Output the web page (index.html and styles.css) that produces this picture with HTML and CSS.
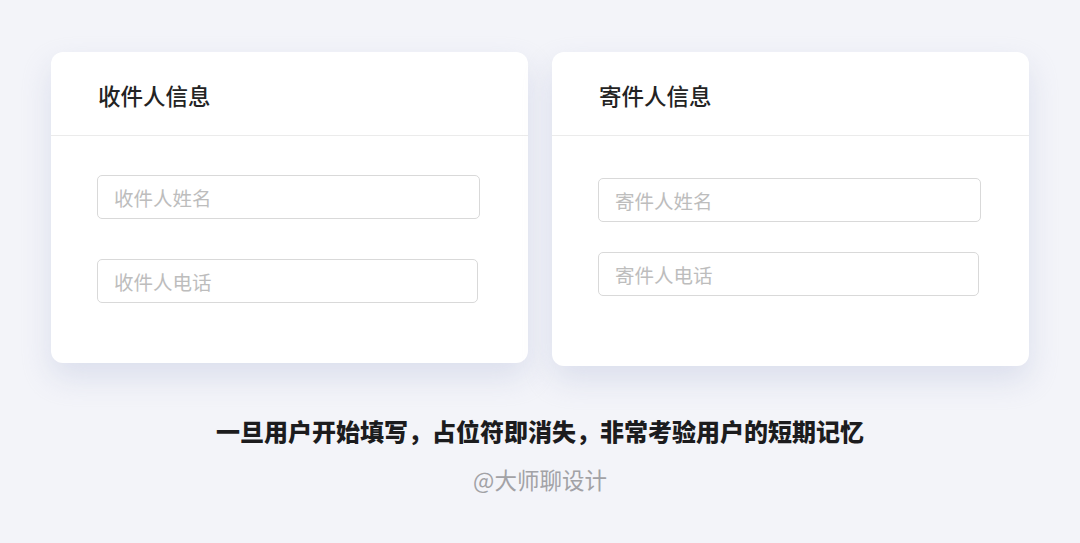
FILE: index.html
```html
<!DOCTYPE html>
<html lang="zh-CN">
<head>
<meta charset="utf-8">
<link rel="stylesheet" href="styles.css">
</head>
<body>
<main class="page">
  <section class="cards">
    <div class="card card--a">
      <div class="card__head">收件人信息</div>
      <div class="card__body">
        <div class="field field--w383">收件人姓名</div>
        <div class="field field--w381">收件人电话</div>
      </div>
    </div>
    <div class="card card--b">
      <div class="card__head">寄件人信息</div>
      <div class="card__body">
        <div class="field field--w383">寄件人姓名</div>
        <div class="field field--w381">寄件人电话</div>
      </div>
    </div>
  </section>
  <p class="caption">一旦用户开始填写，占位符即消失，非常考验用户的短期记忆</p>
  <p class="credit">@大师聊设计</p>
</main>
</body>
</html>
```

FILE: styles.css
```css
* { box-sizing: border-box; }
html, body {
  margin: 0;
  padding: 0;
  width: 1080px;
  height: 543px;
  overflow: hidden;
  background: #f3f4f9;
  font-family: "Noto Sans CJK SC", "Noto Sans", sans-serif;
}
.page {
  display: flex;
  flex-direction: column;
  align-items: center;
  padding-top: 52px;
}
.cards {
  display: flex;
  gap: 24px;
  align-items: flex-start;
  width: 978px;
}
.card {
  width: 477px;
  background: #fff;
  border-radius: 12px;
  box-shadow: 0 14px 30px rgba(190, 198, 222, 0.45);
}
.card--a { height: 311px; }
.card--b { height: 314px; }
.card__head {
  height: 84px;
  border-bottom: 1px solid #ebebeb;
  padding-left: 47px;
  display: flex;
  align-items: center;
  font-size: 22.5px;
  font-weight: 500;
  color: #232323;
  padding-top: 2px;
}
.card__body {
  display: flex;
  flex-direction: column;
  padding-left: 46px;
}
.card--a .card__body { padding-top: 39px; gap: 40px; }
.card--b .card__body { padding-top: 42px; gap: 30px; }
.field {
  height: 44px;
  border: 1.5px solid #d9d9d9;
  border-radius: 5px;
  padding-left: 16px;
  display: flex;
  align-items: center;
  font-size: 19.5px;
  color: #bdbdbd;
}
.field--w383 { width: 383px; }
.field--w381 { width: 381px; }
.caption {
  margin: 47px 0 0;
  font-size: 24px;
  font-weight: 900;
  color: #1c1c1e;
  line-height: 36px;
  letter-spacing: 0px;
}
.credit {
  margin: 14px 0 0;
  font-size: 22.5px;
  color: #a2a2a6;
  line-height: 32px;
}
```
